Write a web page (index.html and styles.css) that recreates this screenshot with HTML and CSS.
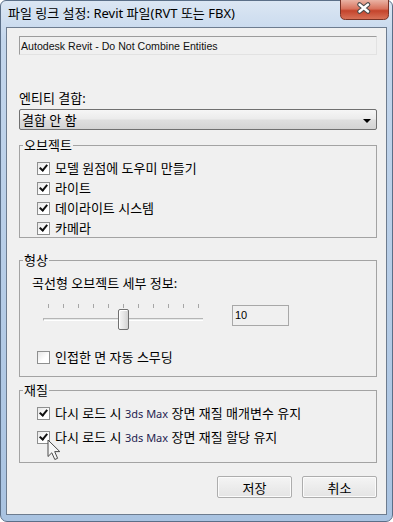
FILE: index.html
```html
<!DOCTYPE html>
<html lang="ko">
<head>
  <meta charset="UTF-8">
  <meta name="viewport" content="width=device-width, initial-scale=1">
  <title>파일 링크 설정</title>
  <link rel="stylesheet" href="styles.css">
</head>
<body>

  <div class="window">

    <div class="titlebar">
      <span class="title">파일 링크 설정: Revit 파일(RVT 또는 FBX)</span>
      <div class="close-btn">
        <svg width="49" height="20" viewBox="0 0 49 20">
          <defs>
            <linearGradient id="closeGrad" x1="0" y1="0" x2="0" y2="1">
              <stop offset="0" stop-color="#eab3a4"/>
              <stop offset="0.45" stop-color="#d8735d"/>
              <stop offset="0.55" stop-color="#c4442c"/>
              <stop offset="1" stop-color="#d9745a"/>
            </linearGradient>
          </defs>
          <path d="M0.5 0 V14.5 Q0.5 19.5 5.5 19.5 H43.5 Q48.5 19.5 48.5 14.5 V0" fill="url(#closeGrad)" stroke="#7a3326"/>
          <path d="M19.5 4.5 L28 11.5 M28 4.5 L19.5 11.5" stroke="#4a4a4a" stroke-width="4.6" stroke-linecap="round"/>
          <path d="M19.5 4.5 L28 11.5 M28 4.5 L19.5 11.5" stroke="#ffffff" stroke-width="2.4" stroke-linecap="round"/>
        </svg>
      </div>
    </div>

    <div class="client">

      <div class="readonly-field">Autodesk Revit - Do Not Combine Entities</div>

      <div class="field-label">엔티티 결합:</div>
      <div class="combo">
        <span>결합 안 함</span>
        <span class="combo-arrow"></span>
      </div>

      <fieldset class="group group-objects">
        <legend>오브젝트</legend>
        <div class="check-list">
          <div class="check-row"><span class="check checked"></span><span>모델 원점에 도우미 만들기</span></div>
          <div class="check-row"><span class="check checked"></span><span>라이트</span></div>
          <div class="check-row"><span class="check checked"></span><span>데이라이트 시스템</span></div>
          <div class="check-row"><span class="check checked"></span><span>카메라</span></div>
        </div>
      </fieldset>

      <fieldset class="group group-shape">
        <legend>형상</legend>
        <div class="shape-label">곡선형 오브젝트 세부 정보:</div>
        <div class="slider-row">
          <div class="slider">
            <div class="ticks">
              <span></span><span></span><span></span><span></span><span></span><span></span>
              <span></span><span></span><span></span><span></span><span></span>
            </div>
            <div class="track"></div>
            <div class="thumb"></div>
          </div>
          <div class="value-box">10</div>
        </div>
        <div class="check-row smooth-row"><span class="check"></span><span>인접한 면 자동 스무딩</span></div>
      </fieldset>

      <fieldset class="group group-material">
        <legend>재질</legend>
        <div class="check-list wide">
          <div class="check-row"><span class="check checked"></span><span>다시 로드 시 <span class="latin">3ds Max</span> 장면 재질 매개변수 유지</span></div>
          <div class="check-row"><span class="check checked"></span><span>다시 로드 시 <span class="latin">3ds Max</span> 장면 재질 할당 유지</span></div>
        </div>
      </fieldset>

      <div class="buttons">
        <button class="btn">저장</button>
        <button class="btn">취소</button>
      </div>

    </div>

    <!-- pointeur de souris au-dessus de la case -->
    <svg class="cursor" width="14" height="22" viewBox="0 0 14 22">
      <path d="M1 1 V17.5 L4.8 13.8 L7.8 20.5 L10.6 19.3 L7.7 12.6 H12.8 Z" fill="#f6f6f6" stroke="#4a4a4a" stroke-width="1" stroke-linejoin="round"/>
    </svg>

  </div>

</body>
</html>
```

FILE: styles.css
```css
:root {
  --client-bg: #f0f0f0;
  --frame-top: #dbe6f3;
  --frame-mid: #c3d6ec;
  --frame-bottom: #a9c3e1;
  --frame-edge: #5b6f88;
  --group-border: #a3a3a3;
  --text-color: #000000;
  --font-ui: "Noto Sans", "Noto Sans CJK KR", sans-serif;
  --font-latin: "Liberation Sans", "Noto Sans CJK KR", sans-serif;
}

html, body {
  margin: 0;
  padding: 0;
}

body {
  width: 393px;
  height: 522px;
  overflow: hidden;
  font-family: var(--font-ui);
  font-size: 13px;
  color: var(--text-color);
}

.window {
  position: relative;
  width: 393px;
  height: 522px;
  box-sizing: border-box;
  border: 1px solid var(--frame-edge);
  border-radius: 6px 6px 7px 7px;
  background: linear-gradient(180deg, var(--frame-top) 0px, var(--frame-mid) 40px, var(--frame-bottom) 100%);
  display: flex;
  flex-direction: column;
}

/* Barre de titre */
.titlebar {
  position: relative;
  height: 26px;
  display: flex;
  align-items: center;
  padding-left: 7px;
}

.title {
  font-size: 13px;
  line-height: 14px;
  margin-top: -2px;
  color: #000;
}

.close-btn {
  position: absolute;
  top: -1px;
  right: 3px;
  width: 49px;
  height: 20px;
}

.close-btn svg {
  display: block;
}

/* Zone client */
.client {
  margin: 0 5px 0 5px;
  height: 488px;
  box-sizing: border-box;
  border: 1px solid #6d7c8f;
  background: var(--client-bg);
  padding: 0 9px 0 12px;
  display: flex;
  flex-direction: column;
}

.readonly-field {
  margin-top: 8px;
  height: 19px;
  box-sizing: border-box;
  border: 1px solid;
  border-color: #9c9c9c #e2e2e2 #e2e2e2 #9c9c9c;
  padding: 0 0 0 1px;
  font-family: var(--font-latin);
  font-size: 10.6px;
  line-height: 18px;
  color: #111;
  background: var(--client-bg);
}

.field-label {
  margin-top: 36px;
  line-height: 14px;
}

.combo {
  margin-top: 4px;
  height: 21px;
  box-sizing: border-box;
  border: 1px solid #707070;
  border-radius: 2px;
  background: linear-gradient(180deg, #f6f6f6 0%, #ececec 45%, #dedede 55%, #d3d3d3 100%);
  display: flex;
  align-items: center;
  justify-content: space-between;
  padding: 0 5px 0 2px;
  line-height: 14px;
}

.combo-arrow {
  width: 0;
  height: 0;
  border-left: 4px solid transparent;
  border-right: 4px solid transparent;
  border-top: 4px solid #000;
  margin-top: 2px;
}

/* Groupes */
.group {
  margin: 0;
  padding: 0;
  border: 1px solid var(--group-border);
  box-sizing: border-box;
  min-width: 0;
}

.group legend {
  margin-left: 3px;
  padding: 0 1px 0 1px;
  line-height: 14px;
  font-size: 13px;
}

.group-objects {
  margin-top: 8px;
  height: 100px;
}

.group-shape {
  margin-top: 15px;
  height: 124px;
}

.group-material {
  margin-top: 6px;
  height: 80px;
}

.check-list {
  display: flex;
  flex-direction: column;
  gap: 2px;
  padding-top: 7px;
}

.check-list.wide {
  gap: 6px;
}

.check-row {
  height: 18px;
  display: flex;
  align-items: center;
  padding-left: 17px;
  line-height: 14px;
  white-space: nowrap;
}

.check {
  width: 13px;
  height: 13px;
  box-sizing: border-box;
  border: 1px solid #8e8f8f;
  background: linear-gradient(135deg, #e6e6e6 0%, #ffffff 60%);
  margin-right: 5px;
  flex-shrink: 0;
  position: relative;
}

.check.checked::after {
  content: "";
  position: absolute;
  left: 3px;
  top: 0px;
  width: 3px;
  height: 6px;
  border: solid #111;
  border-width: 0 2px 2px 0;
  transform: rotate(40deg);
}

.latin {
  font-family: "Noto Sans", sans-serif;
  font-size: 11px;
  color: #1e2350;
}

/* Groupe Forme */
.shape-label {
  margin-top: 9px;
  padding-left: 12px;
  line-height: 14px;
}

.slider-row {
  margin-top: 13px;
  display: flex;
  align-items: flex-start;
}

.slider {
  position: relative;
  margin-left: 23px;
  width: 160px;
  height: 27px;
}

.ticks {
  display: flex;
  justify-content: space-between;
  margin: 1px 0 0 5px;
  width: 151px;
}

.ticks span {
  width: 1px;
  height: 4px;
  background: #a6a6a6;
}

.track {
  margin-top: 10px;
  height: 3px;
  box-sizing: border-box;
  border-top: 1px solid #b5b5b5;
  border-left: 1px solid #b5b5b5;
  background: #e7eaea;
  border-bottom: 1px solid #ffffff;
}

.thumb {
  position: absolute;
  left: 75px;
  top: 6px;
  width: 11px;
  height: 21px;
  box-sizing: border-box;
  border: 1px solid #707070;
  border-radius: 2px;
  background: linear-gradient(90deg, #f7f7f7 0%, #e6e6e6 50%, #d2d2d2 100%);
  box-shadow: inset 1px 1px 0 #ffffff;
}

.value-box {
  margin: 2px 0 0 29px;
  width: 57px;
  height: 21px;
  box-sizing: border-box;
  border: 1px solid #a8a8a8;
  background: var(--client-bg);
  font-family: var(--font-latin);
  font-size: 11px;
  line-height: 19px;
  padding-left: 2px;
}

.smooth-row {
  margin-top: 18px;
}

/* Boutons */
.buttons {
  margin-top: 13px;
  display: flex;
  justify-content: flex-end;
  gap: 10px;
  padding-right: 0;
}

.btn {
  width: 75px;
  height: 22px;
  box-sizing: border-box;
  border: 1px solid #adadad;
  border-radius: 2px;
  background: linear-gradient(180deg, #f4f4f4 0%, #ececec 50%, #e4e4e4 100%);
  box-shadow: inset 0 0 0 1px #fbfbfb;
  font-family: var(--font-ui);
  font-size: 13px;
  color: #000;
  padding: 0;
}

.cursor {
  position: absolute;
  left: 46px;
  top: 438px;
}
```
